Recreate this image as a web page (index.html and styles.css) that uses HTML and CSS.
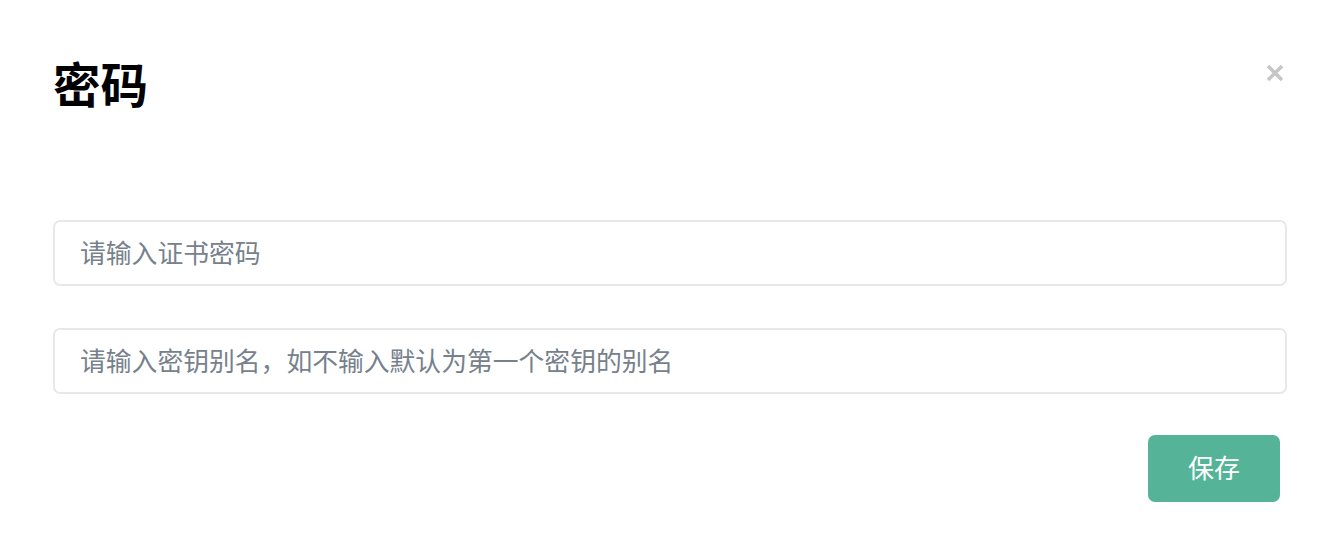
FILE: index.html
```html
<!DOCTYPE html>
<html lang="zh-CN">
<head>
<meta charset="utf-8">
<title>密码</title>
<link rel="stylesheet" href="styles.css">
</head>
<body>
<div class="dialog">
  <div class="dialog-header">
    <h1 class="dialog-title">密码</h1>
    <button class="close-btn" aria-label="关闭">
      <svg viewBox="0 0 18 18" width="18" height="18">
        <path d="M2 2 L16 16 M16 2 L2 16" stroke="#c6c6c6" stroke-width="3.6" stroke-linecap="butt" fill="none"/>
      </svg>
    </button>
  </div>
  <form class="dialog-form">
    <input class="field" type="password" placeholder="请输入证书密码">
    <input class="field" type="text" placeholder="请输入密钥别名，如不输入默认为第一个密钥的别名">
    <div class="actions">
      <button type="button" class="save-btn">保存</button>
    </div>
  </form>
</div>
</body>
</html>
```

FILE: styles.css
```css
* { box-sizing: border-box; }
html, body {
  margin: 0;
  padding: 0;
  background: #ffffff;
  font-family: "Noto Sans CJK SC", "Noto Sans", "Liberation Sans", sans-serif;
}
.dialog {
  width: 1340px;
  height: 540px;
  padding: 54px 53px 0 53px;
}
.dialog-header {
  display: flex;
  justify-content: space-between;
  align-items: flex-start;
  height: 61px;
}
.dialog-title {
  margin: 0;
  font-size: 47.5px;
  line-height: 58px;
  font-weight: 700;
  color: #000000;
  letter-spacing: 0;
}
.close-btn {
  border: 0;
  background: transparent;
  padding: 0;
  margin: 10px 3px 0 0;
  width: 18px;
  height: 18px;
  cursor: pointer;
  display: block;
}
.close-btn svg { display: block; }
.dialog-form {
  margin-top: 105px;
  display: flex;
  flex-direction: column;
  gap: 42px;
}
.field {
  display: block;
  width: 100%;
  height: 66px;
  border: 2px solid #e8e8e8;
  border-radius: 7px;
  padding: 0 25px 4px 25px;
  font-family: inherit;
  font-size: 25.8px;
  color: #333;
  outline: none;
  background: #fff;
}
.field::placeholder {
  color: #76818c;
}
.actions {
  display: flex;
  justify-content: flex-end;
  margin-top: -1px;
  padding-right: 7px;
}
.save-btn {
  width: 132px;
  height: 67px;
  border: 0;
  border-radius: 7px;
  background: #55b498;
  color: #ffffff;
  font-family: inherit;
  font-size: 26px;
  cursor: pointer;
  padding: 0 0 4px 0;
}
```
